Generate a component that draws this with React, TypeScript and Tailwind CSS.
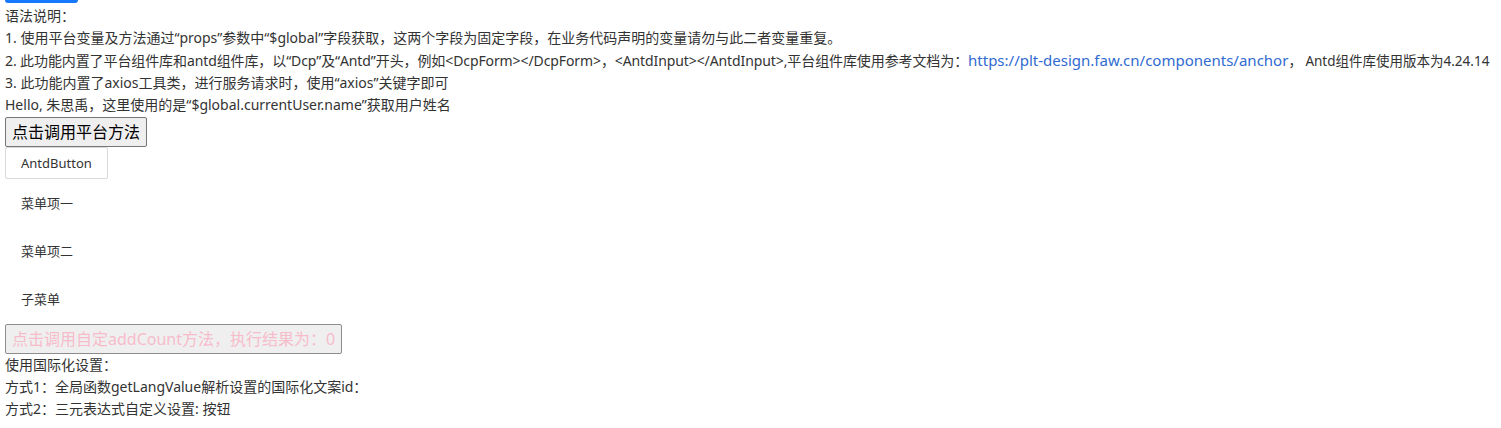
export default function App() {
  return (
    <div className="bg-white text-[14px] leading-[22px] text-[#333] font-['Noto_Sans','Noto_Sans_CJK_SC',sans-serif]">
      <div className="ml-[5px] h-[3px] w-[73px] rounded-b-[3px] bg-[#1677ff]" />
      <div className="px-[5px] pt-[2px]">
        <p>语法说明：</p>
        <p>1. 使用平台变量及方法通过“props”参数中“$global”字段获取，这两个字段为固定字段，在业务代码声明的变量请勿与此二者变量重复。</p>
        <p className="whitespace-nowrap tracking-[-0.1px]">
          2. 此功能内置了平台组件库和antd组件库，以“Dcp”及“Antd”开头，例如&lt;DcpForm&gt;&lt;/DcpForm&gt;，&lt;AntdInput&gt;&lt;/AntdInput&gt;,平台组件库使用参考文档为：
          <a className="text-[15px] tracking-normal text-[#2f6bd1]">https://plt-design.faw.cn/components/anchor</a>
          <span className="text-[13.5px] tracking-normal">， Antd组件库使用版本为4.24.14</span>
        </p>
        <p>3. 此功能内置了axios工具类，进行服务请求时，使用“axios”关键字即可</p>
        <p>Hello, 朱思禹，这里使用的是“$global.currentUser.name”获取用户姓名</p>
        <button className="mt-[1px] block h-[30px] rounded-[2px] border border-[#767676] bg-[#efefef] px-[6px] text-[16px] font-normal text-black">
          点击调用平台方法
        </button>
        <button className="block h-[32px] rounded-[2px] border border-[#d9d9d9] bg-white px-[15px] text-[13px] text-[#333]">
          AntdButton
        </button>
        <ul className="mt-[4px] flex flex-col gap-[8px] text-[13px]">
          <li className="flex h-[40px] items-center px-[16px]">菜单项一</li>
          <li className="flex h-[40px] items-center px-[16px]">菜单项二</li>
          <li className="flex h-[40px] items-center px-[16px]">子菜单</li>
        </ul>
        <button disabled className="mt-[5px] block h-[30px] rounded-[2px] border border-[#8d8d8d] bg-[#efefef] px-[6px] text-[16px] text-[#f7bccb]">
          点击调用自定addCount方法，执行结果为：0
        </button>
        <p>使用国际化设置：</p>
        <p>方式1：全局函数getLangValue解析设置的国际化文案id：</p>
        <p>方式2：三元表达式自定义设置: 按钮</p>
      </div>
    </div>
  );
}
